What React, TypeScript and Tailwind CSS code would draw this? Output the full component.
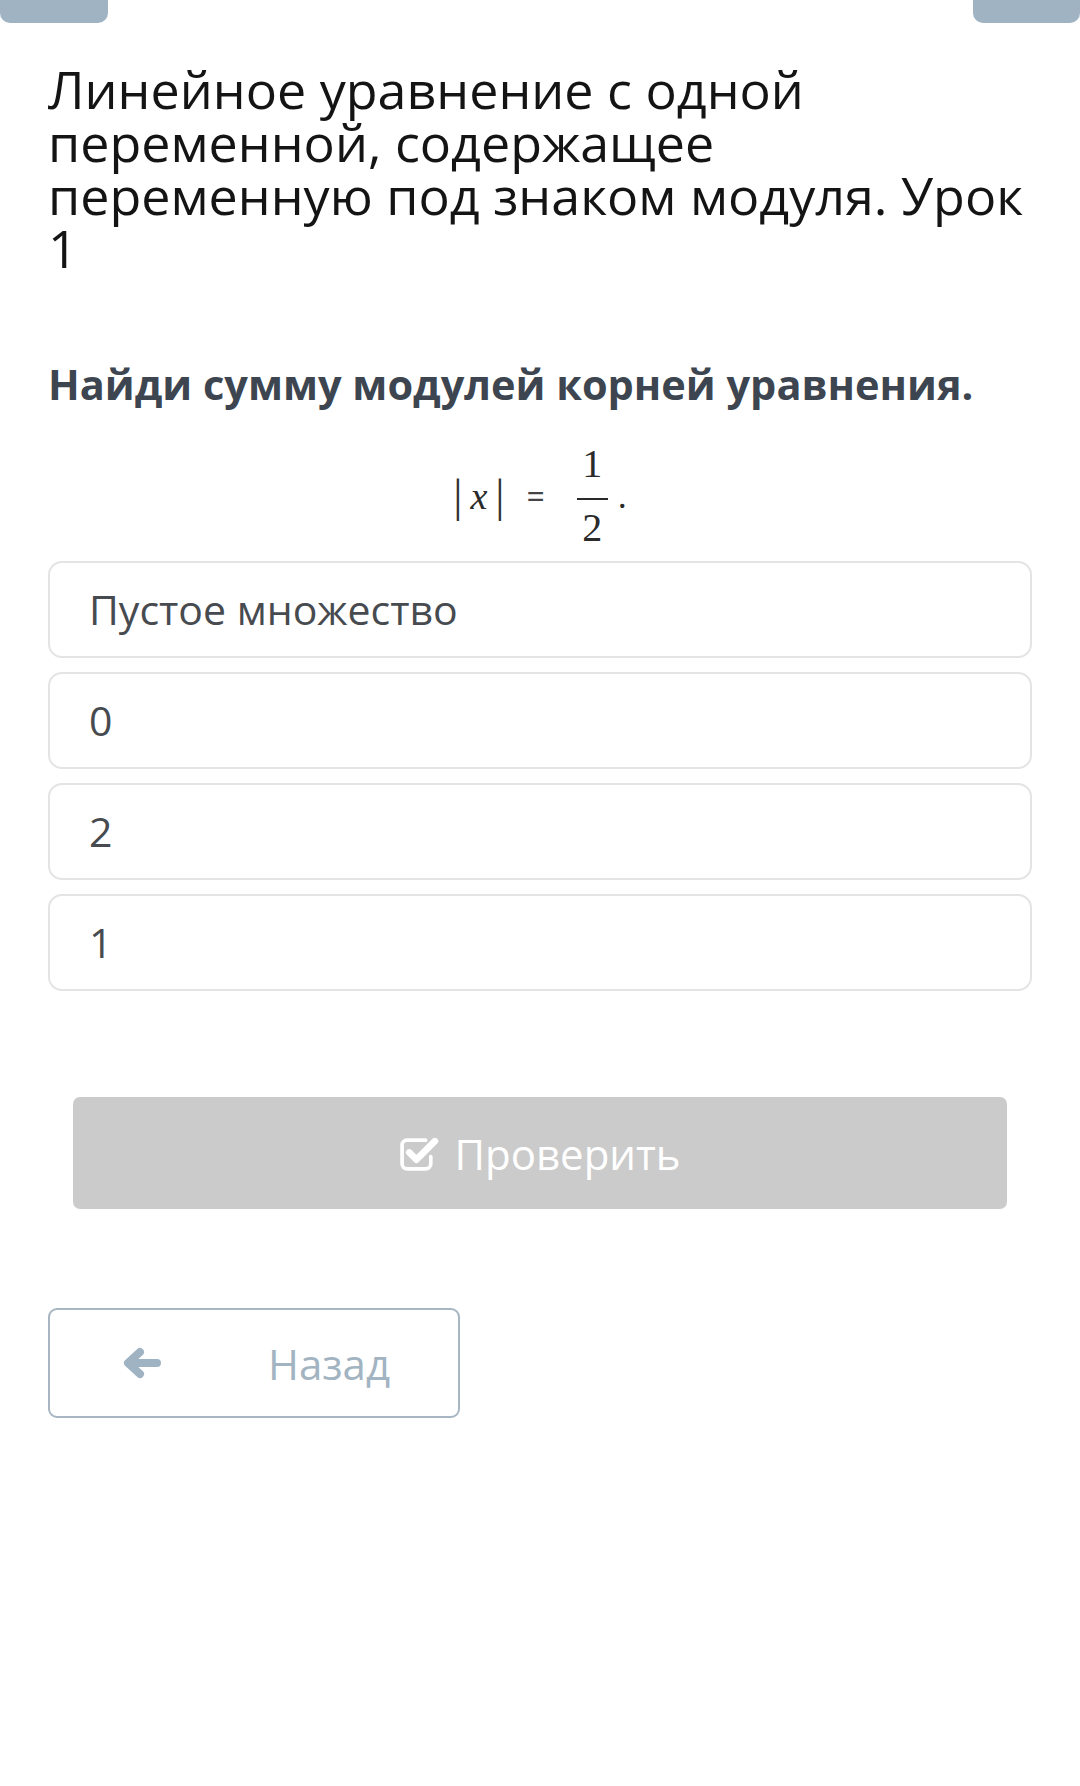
import React from "react";

const OPTIONS = ["Пустое множество", "0", "2", "1"];

function CheckSquareIcon() {
  return (
    <svg viewBox="0 0 40 36" className="w-[41px] h-[37px]" fill="none">
      <path
        d="M31 21v7a5 5 0 0 1-5 5H8a5 5 0 0 1-5-5V10a5 5 0 0 1 5-5h18"
        stroke="white"
        strokeWidth="3.6"
        strokeLinecap="round"
      />
      <path
        d="M10 17l7 7L35 6"
        stroke="white"
        strokeWidth="6.5"
        strokeLinecap="round"
        strokeLinejoin="round"
      />
    </svg>
  );
}

function ArrowLeftIcon() {
  return (
    <svg viewBox="0 0 40 36" className="w-[40px] h-[36px]" fill="none">
      <path
        d="M35 18H8M18 7L6 18l12 11"
        stroke="#9fb3c3"
        strokeWidth="8"
        strokeLinecap="round"
        strokeLinejoin="round"
      />
    </svg>
  );
}

export default function App() {
  return (
    <div className="relative min-h-[1786px] bg-white font-['Open_Sans',sans-serif] select-none">
      <div className="flex justify-between">
        <div className="w-[108px] h-[23px] rounded-b-[10px] bg-[#9fb3c3]" />
        <div className="w-[107px] h-[23px] rounded-b-[10px] bg-[#9fb3c3]" />
      </div>

      <div className="px-12">
        <h1 className="mt-[39px] text-[52px] leading-[53px] font-normal text-[#141414]">
          Линейное уравнение с одной переменной, содержащее переменную под
          знаком модуля. Урок 1
        </h1>

        <p className="mt-[86px] text-[41.5px] leading-[48px] font-bold text-[#3d4650]">
          Найди сумму модулей корней уравнения.
        </p>

        <div className="mt-[34px] flex items-center justify-center text-[#2a2a2a] font-['Liberation_Serif',serif]">
          <span className="text-[46px] leading-[50px] text-[#333]">|</span>
          <span className="mx-[8px] text-[38px] leading-[50px] italic">x</span>
          <span className="text-[46px] leading-[50px] text-[#333]">|</span>
          <span className="ml-[22px] mr-[32px] text-[32px] leading-[50px] font-['Open_Sans',sans-serif] text-[#444]">
            =
          </span>
          <span className="flex flex-col items-center text-[40px] leading-[44px]">
            <span>1</span>
            <span className="w-[31px] h-[2px] bg-[#2a2a2a] mt-[12px] mb-[6px]" />
            <span>2</span>
          </span>
          <span className="text-[36px] leading-[50px] ml-[10px]">.</span>
        </div>

        <div className="mt-[11px] flex flex-col gap-[14px]">
          {OPTIONS.map((opt) => (
            <div
              key={opt}
              className="h-[97px] flex items-center px-[39px] rounded-[14px] border-2 border-[#e4e4e4] bg-white text-[41px] text-[#474b50]"
            >
              {opt}
            </div>
          ))}
        </div>

        <div className="mt-[106px] px-[25px]">
          <button className="w-full h-[112px] rounded-[7px] bg-[#cbcbcb] flex items-center justify-center gap-[14px] text-white text-[42px]">
            <CheckSquareIcon />
            <span>Проверить</span>
          </button>
        </div>

        <div className="mt-[99px]">
          <button className="w-[412px] h-[110px] rounded-[9px] border-2 border-[#a7b6c2] bg-white flex items-center pl-[72px] text-[42px] text-[#a2b3c1]">
            <ArrowLeftIcon />
            <span className="ml-[106px]">Назад</span>
          </button>
        </div>
      </div>
    </div>
  );
}
